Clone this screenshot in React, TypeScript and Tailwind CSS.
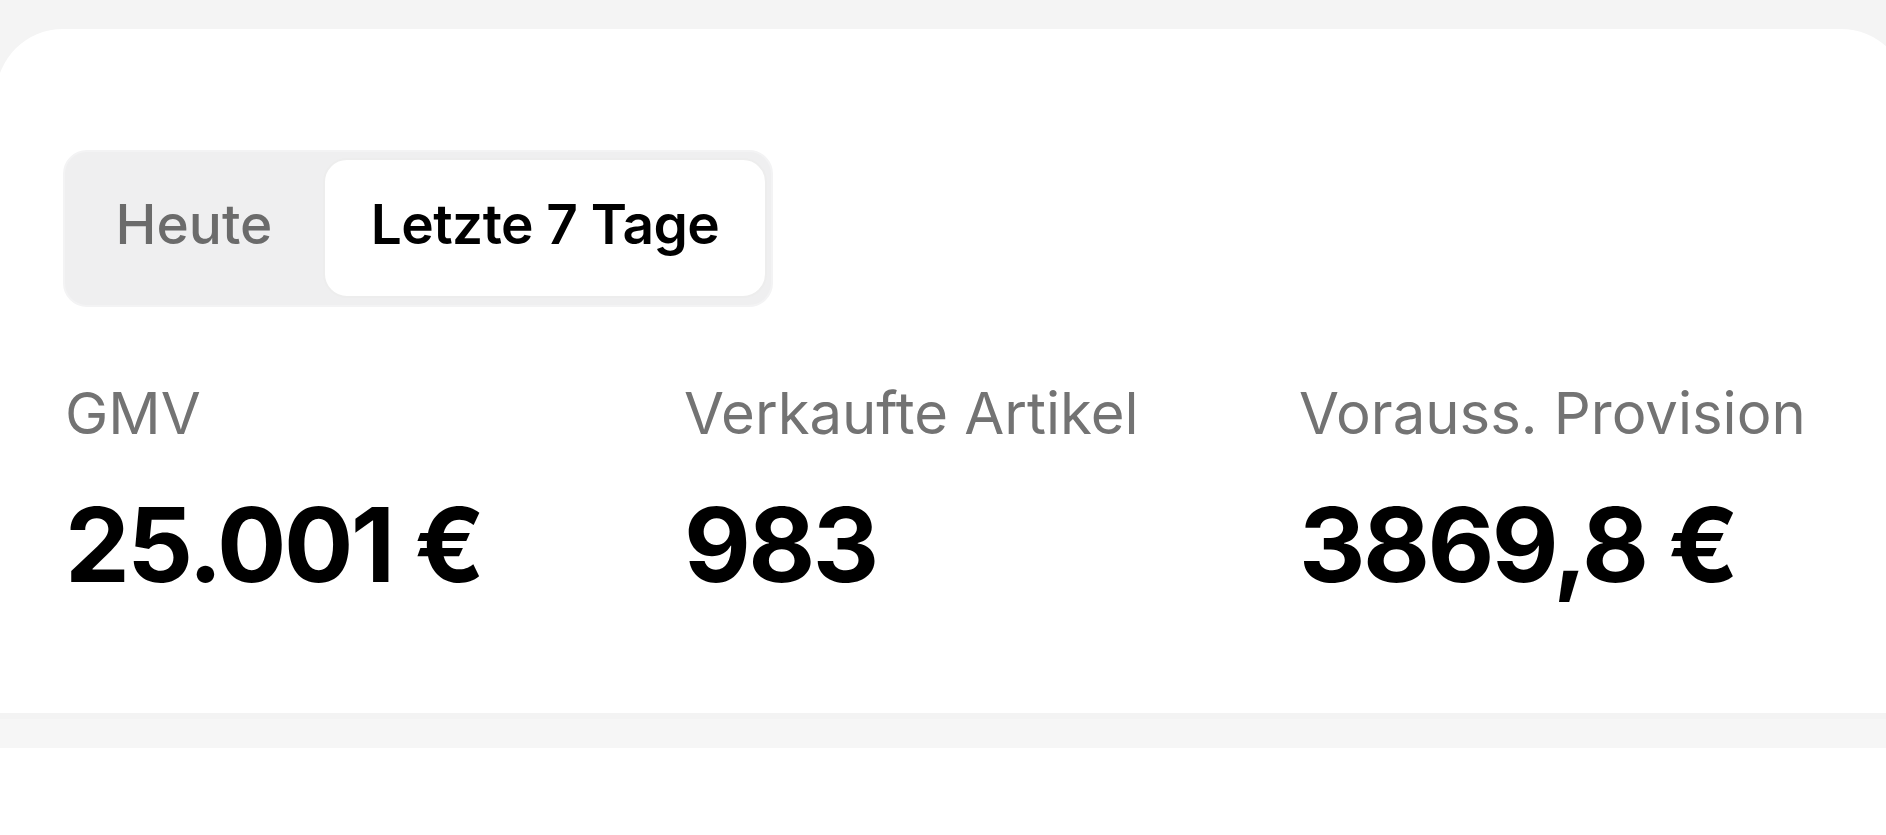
import React from "react";

const stats = [
  { label: "GMV", value: "25.001 €" },
  { label: "Verkaufte Artikel", value: "983" },
  { label: "Vorauss. Provision", value: "3869,8 €" },
];

export default function App() {
  return (
    <div className="w-full h-[835px] overflow-hidden bg-white font-['Inter',sans-serif]">
      <div className="bg-[#f4f4f4] pt-[29px]">
        <div className="bg-white -ml-[4px] -mr-[22px] rounded-t-[67px] h-[684px] pt-[121px] pl-[67px]">
          <div className="inline-flex items-center h-[157px] bg-[#efeff0] rounded-[24px] border-2 border-[#f3f3f4] pt-[6px] pb-[7px] pr-[4px]">
            <div className="w-[258px] flex justify-center items-center pb-[8px]">
              <span className="text-[55px] leading-none font-medium text-[#6b6b6b]">Heute</span>
            </div>
            <div className="w-[444px] h-[140px] bg-white rounded-[24px] border-2 border-[#ededed] flex items-center justify-center pb-[8px]">
              <span className="text-[55px] leading-none font-semibold text-black tracking-[-0.01em]">Letzte 7 Tage</span>
            </div>
          </div>
          <div className="grid grid-cols-[619px_615px_1fr] mt-[77px] pl-[2px]">
            {stats.map((s) => (
              <div key={s.label} className="flex flex-col">
                <span className="text-[58px] leading-none font-normal text-[#737373] whitespace-nowrap">{s.label}</span>
                <span className="mt-[51px] text-[103px] leading-none font-bold text-black tracking-[-0.025em] whitespace-nowrap">{s.value}</span>
              </div>
            ))}
          </div>
        </div>
      </div>
      <div className="h-[35px] bg-[#f6f6f6] border-t-[6px] border-[#f3f3f3]" />
      <div className="bg-white h-[87px]" />
    </div>
  );
}
